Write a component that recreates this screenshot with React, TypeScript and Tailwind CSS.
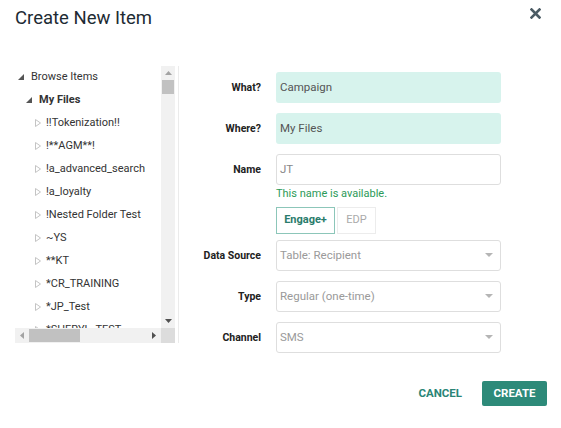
import React from 'react';

const font = { fontFamily: 'Roboto, "Liberation Sans", sans-serif' };

const children = [
  '!!Tokenization!!',
  '!**AGM**!',
  '!a_advanced_search',
  '!a_loyalty',
  '!Nested Folder Test',
  '~YS',
  '**KT',
  '*CR_TRAINING',
  '*JP_Test',
  '*SHERYL_TEST',
];

function Expanded() {
  return (
    <svg width="7" height="7" viewBox="0 0 7 7" className="shrink-0">
      <polygon points="6,0 6,6 0,6" fill="#555" />
    </svg>
  );
}

function Collapsed() {
  return (
    <svg width="6" height="8" viewBox="0 0 6 8" className="-mt-[1px] shrink-0">
      <polygon points="0.5,0.5 5.5,4 0.5,7.5" fill="none" stroke="#c4c4c4" strokeWidth="1" />
    </svg>
  );
}

function Caret() {
  return (
    <svg width="8" height="5" viewBox="0 0 8 5" className="shrink-0">
      <polygon points="0,0 8,0 4,4" fill="#b5b5b5" />
    </svg>
  );
}

function Row({ label, children }: { label: string; children: React.ReactNode }) {
  return (
    <div className="flex items-center">
      <div className="w-[82px] text-right text-[10.5px] font-bold text-[#222]">{label}</div>
      <div className="ml-[15px] w-[225px]">{children}</div>
    </div>
  );
}

function Select({ value }: { value: string }) {
  return (
    <div className="flex h-[31px] items-center justify-between rounded-[3px] border border-[#dedede] bg-white pl-[3px] pr-[7px] text-[11.5px] text-[#9a9a9a]">
      <span>{value}</span>
      <Caret />
    </div>
  );
}

export default function App() {
  return (
    <div className="relative h-[428px] w-[561px] overflow-hidden bg-white" style={font}>
      {/* Header */}
      <div className="flex items-start justify-between pl-[15px] pr-[20px] pt-[6px]">
        <h1 className="text-[18.5px] leading-[24px] text-[#1d2b33]">Create New Item</h1>
        <svg width="11" height="11" viewBox="0 0 11 11" className="mt-[2px]">
          <path d="M1.5 1.5 L9.5 9.5 M9.5 1.5 L1.5 9.5" stroke="#4b5b64" strokeWidth="2.6" strokeLinecap="square" />
        </svg>
      </div>

      <div className="mt-[36px] flex">
        {/* Tree panel */}
        <div className="ml-[15px] flex h-[277px] w-[160px] flex-col">
          <div className="flex h-[262px]">
            <div className="w-[146px] overflow-hidden text-[11px] text-[#333]">
              <div>
                <div className="flex h-[23px] items-center gap-[6px] pl-[3px]">
                  <Expanded />
                  <span>Browse Items</span>
                </div>
                <div className="flex h-[23px] items-center gap-[6px] pl-[11px] font-bold">
                  <Expanded />
                  <span>My Files</span>
                </div>
                {children.map((c) => (
                  <div key={c} className="flex h-[23px] items-center gap-[5px] pl-[20px] whitespace-nowrap">
                    <Collapsed />
                    <span>{c}</span>
                  </div>
                ))}
              </div>
            </div>
            {/* vertical scrollbar */}
            <div className="flex w-[14px] flex-col items-center bg-[#f1f1f1]">
              <div className="flex h-[14px] items-center justify-center">
                <svg width="7" height="4" viewBox="0 0 7 4"><polygon points="3.5,0 7,4 0,4" fill="#a3a3a3" /></svg>
              </div>
              <div className="h-[14px] w-[12px] bg-[#c1c1c1]" />
              <div className="flex-1" />
              <div className="flex h-[14px] items-center justify-center">
                <svg width="7" height="4" viewBox="0 0 7 4"><polygon points="0,0 7,0 3.5,4" fill="#505050" /></svg>
              </div>
            </div>
          </div>
          {/* horizontal scrollbar */}
          <div className="flex h-[15px]">
            <div className="flex w-[146px] items-center bg-[#f1f1f1]">
              <div className="flex w-[14px] justify-center">
                <svg width="4" height="7" viewBox="0 0 4 7"><polygon points="4,0 4,7 0,3.5" fill="#a3a3a3" /></svg>
              </div>
              <div className="h-[13px] w-[51px] bg-[#c1c1c1]" />
              <div className="flex-1" />
              <div className="flex w-[14px] justify-center">
                <svg width="4" height="7" viewBox="0 0 4 7"><polygon points="0,0 4,3.5 0,7" fill="#505050" /></svg>
              </div>
            </div>
            <div className="w-[14px] bg-[#dcdcdc]" />
          </div>
        </div>
        <div className="ml-[3px] h-[277px] w-px bg-[#ebebeb]" />

        {/* Form */}
        <div className="flex flex-col pt-[6px]">
          <div className="flex flex-col gap-[10px]">
            <Row label="What?">
              <div className="flex h-[31px] items-center rounded-[3px] bg-[#d7f3ed] pl-[4px] text-[11.5px] text-[#555]">Campaign</div>
            </Row>
            <Row label="Where?">
              <div className="flex h-[31px] items-center rounded-[3px] bg-[#d7f3ed] pl-[4px] text-[11.5px] text-[#555]">My Files</div>
            </Row>
            <Row label="Name">
              <div className="flex h-[31px] items-center rounded-[3px] border border-[#dedede] bg-white pl-[3px] text-[11.5px] text-[#888]">JT</div>
            </Row>
          </div>
          <div className="ml-[97px] mt-[2px] text-[11px] leading-[14px] text-[#2c9a58]">This name is available.</div>
          <div className="ml-[97px] mt-[6px] flex gap-[2px]">
            <div className="flex h-[27px] w-[59px] items-center justify-center border border-[#8cc6b9] text-[11px] font-bold text-[#2a7c6c]">Engage+</div>
            <div className="flex h-[27px] w-[39px] items-center justify-center border border-[#ececec] text-[11px] text-[#aaa]">EDP</div>
          </div>
          <div className="mt-[6px] flex flex-col gap-[10px]">
            <Row label="Data Source"><Select value="Table: Recipient" /></Row>
            <Row label="Type"><Select value="Regular (one-time)" /></Row>
            <Row label="Channel"><Select value="SMS" /></Row>
          </div>
        </div>
      </div>

      {/* Footer */}
      <div className="mt-[28px] flex items-center justify-end pr-[14px]">
        <button className="mr-[20px] text-[11.5px] font-bold text-[#2a8576]">CANCEL</button>
        <button className="flex h-[25px] w-[65px] items-center justify-center rounded-[2px] bg-[#2d8a79] text-[11.5px] font-bold text-white">CREATE</button>
      </div>
    </div>
  );
}
